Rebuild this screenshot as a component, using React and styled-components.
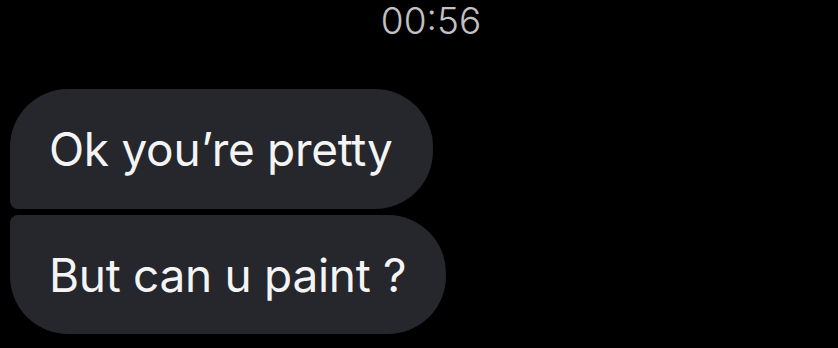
import React from 'react';
import styled, { createGlobalStyle } from 'styled-components';

const GlobalStyle = createGlobalStyle`
  html, body {
    margin: 0;
    padding: 0;
    background: #000;
  }
  body {
    font-family: Inter, "Liberation Sans", Arial, sans-serif;
  }
`;

const messages = [
  { id: 1, text: 'Ok you’re pretty' },
  { id: 2, text: 'But can u paint ?' },
];

export default function App() {
  return (
    <>
      <GlobalStyle />
      <Screen>
        <TimeStamp>00:56</TimeStamp>
        <Thread>
          {messages.map((msg, idx) => (
            <Bubble
              key={msg.id}
              first={idx === 0}
              last={idx === messages.length - 1}
            >
              {msg.text}
            </Bubble>
          ))}
        </Thread>
      </Screen>
    </>
  );
}

const Screen = styled.div`
  background: #000;
  width: 838px;
  height: 348px;
  padding: 0 10px;
  box-sizing: border-box;
  overflow: hidden;
`;

const TimeStamp = styled.div`
  text-align: center;
  padding-left: 24px;
  margin-top: -2px;
  font-size: 37px;
  font-weight: 300;
  line-height: 46px;
  color: #c2c2c4;
`;

const Thread = styled.div`
  margin-top: 45px;
  display: flex;
  flex-direction: column;
  align-items: flex-start;
  gap: 6px;
`;

const Bubble = styled.div.withConfig({
  shouldForwardProp: (prop) => prop !== 'first' && prop !== 'last',
})`
  display: flex;
  align-items: center;
  height: ${(p) => (p.first ? '120px' : '119px')};
  padding: 0 40px 0 39px;
  box-sizing: border-box;
  background: #25272c;
  color: #f4f4f5;
  font-size: 46px;
  letter-spacing: -0.3px;
  line-height: 56px;
  white-space: nowrap;
  border-radius: ${(p) => (p.first ? '58px' : '8px')} 58px 58px
    ${(p) => (p.last ? '58px' : '8px')};
`;
